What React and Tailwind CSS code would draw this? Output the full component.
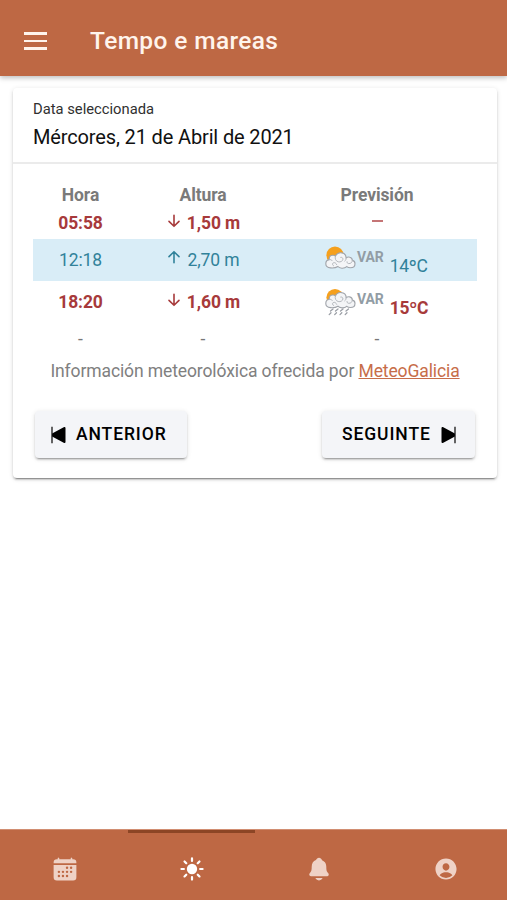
import { IoCalendar, IoSunny, IoNotifications, IoPersonCircle } from 'react-icons/io5'
import clsx from 'clsx'

const tides = [
  { time: '05:58', height: '1,50 m', rising: false },
  { time: '12:18', height: '2,70 m', rising: true, sky: 'cloudy', temp: '14ºC' },
  { time: '18:20', height: '1,60 m', rising: false, sky: 'rain', temp: '15ºC' },
]

const tabs = [
  { id: 'calendar', icon: IoCalendar },
  { id: 'weather', icon: IoSunny },
  { id: 'alerts', icon: IoNotifications },
  { id: 'profile', icon: IoPersonCircle },
]

const TideArrow = ({ rising }) => (
  <svg
    className={clsx('h-[14px] w-[14px] shrink-0 -translate-y-[3px]', rising && 'rotate-180')}
    viewBox="0 0 14 14"
    fill="none"
    stroke="currentColor"
    strokeWidth="1.6"
    strokeLinecap="round"
    strokeLinejoin="round"
  >
    <path d="M7 1.2v11M2 7.400 7 12.300l5-4.900" />
  </svg>
)

const SkyIcon = ({ sky }) => {
  const rain = sky === 'rain'
  return (
    <svg className="h-7 w-[31px] shrink-0" viewBox="0 0 31 28">
      <circle cx="10" cy={rain ? 8.6 : 9.2} r="8.6" fill="#f5a01d" />
      <g transform={rain ? 'translate(0 -4)' : 'translate(0 -.7)'}>
        <path
          d="M5.5 22.6C2.4 22.6.8 20.8.8 18.4c0-2.3 1.5-3.8 3.4-4.1-.3-3 1.6-4.6 3.8-4.3 1-.1 1.9.3 2.4.9C11.500 8.600 13.500 7.300 15.900 7.500c3.200.2 5.200 2.500 5.300 5.100 1-.8 2.200-1.100 3.600-.7 1.700.4 2.500 1.700 2.600 3.200 1.600.3 2.600 1.500 2.600 3.300 0 2.500-1.900 4.100-4.600 4.100-1.600 0-2.700-.4-3.600-1.200-1.200 1.100-3 1.700-4.900 1.600-1.800-.1-3.200-.7-4-1.700-1.700 1.100-4.400 1.700-7.400 1.400Z"
          fill="#f4f5f7"
          stroke="#a0a4aa"
          strokeWidth="1.1"
        />
        <path
          d="M10.400 10.900c-.8 2.600.4 4.900 2.800 5.600 2.300.6 4.500-.7 4.700-2.500.1-1.400-1-2.300-2.200-2M4.200 14.300c1.300-.3 2.400.2 3 1.100M21.200 12.600c.1 1.300-.5 2.500-1.400 3.200M27.400 15.100c-.1 2-1.700 3.300-3.600 3.200-1.200 0-1.900-.8-1.800-1.800M8.500 20.500c-1.200-.6-1.400-2.200-.3-2.900 1.300-.8 3 .2 3.500 1.700"
          fill="none"
          stroke="#b4b8bd"
          strokeWidth="1"
          strokeLinecap="round"
        />
      </g>
      {rain && (
        <path
          d="M8 20l-2.500 2M13 20l-2.500 2M18 20l-2.500 2M23.500 20l-2.500 2M6 23.800l-1.800 1.800M11.500 23.800l-1.800 1.800M16.800 23.800 15 25.600M22 23.800l-1.800 1.800"
          stroke="#9a9ea5"
          strokeWidth="1.300"
          strokeLinecap="round"
        />
      )}
    </svg>
  )
}

const SkipIcon = ({ flip }) => (
  <svg className={clsx('h-[18px] w-[15px]', flip && '-scale-x-100')} viewBox="0 0 15 18">
    <path d="M1 .700v16.600" stroke="currentColor" strokeWidth="1.200" />
    <path
      d="M13.600 1.900v14.200L2 9.900V8.100L13.600 1.900Z"
      fill="currentColor"
      stroke="currentColor"
      strokeWidth="1.800"
      strokeLinejoin="round"
    />
  </svg>
)

const NavButton = ({ children, className }) => (
  <button
    className={clsx(
      'flex h-[47px] items-center rounded bg-[#f4f5f8] text-[17.5px] font-medium tracking-[0.9px] text-black shadow-[0_3px_1px_-2px_rgba(0,0,0,0.2),0_2px_2px_0_rgba(0,0,0,0.14),0_1px_5px_0_rgba(0,0,0,0.12)]',
      className
    )}
  >
    {children}
  </button>
)

const TideRow = ({ tide }) => (
  <div
    className={clsx(
      'grid grid-cols-[95px_150px_198px] items-center text-center text-[17.5px] tracking-[-0.1px]',
      tide.rising ? 'bg-[#d9edf7] text-[#31829a]' : 'font-bold text-[#a73a3b]',
      tide.sky ? 'h-[42px]' : 'h-[31px]',
      tide.sky === 'rain' && 'pt-px'
    )}
  >
    <span>{tide.time}</span>
    <span className="flex items-center justify-center gap-1.5 pl-px">
      <TideArrow rising={tide.rising} />
      {tide.height}
    </span>
    {tide.sky ? (
      <span className="flex items-center pl-[47px]">
        <SkyIcon sky={tide.sky} />
        <span className="ml-px -translate-y-[3px] text-[14px] font-bold text-[#929da5]">VAR</span>
        <span className="ml-[6px] translate-y-[6px] tracking-[-0.3px]">{tide.temp}</span>
      </span>
    ) : (
      <span className="mx-auto h-[2px] w-[11px] -translate-y-[3px] bg-[#c57576]" />
    )}
  </div>
)

export default function App() {
  return (
    <div className="flex h-[900px] w-[507px] flex-col overflow-hidden bg-white font-[Roboto,sans-serif]">
      {/* Toolbar */}
      <header className="z-10 flex h-[76px] shrink-0 items-center bg-[#be6844] pt-1.5 pl-6 text-white shadow-[0_2px_5px_rgba(0,0,0,0.25)]">
        <button className="flex w-[23px] flex-col gap-[5px]" aria-label="Menú">
          <span className="h-[2.5px] w-full bg-[#fff4ec]" />
          <span className="h-[2.5px] w-full bg-[#fff4ec]" />
          <span className="h-[2.5px] w-full bg-[#fff4ec]" />
        </button>
        <h1 className="ml-[43px] text-[24.5px] font-medium tracking-[0.37px] text-[#fff4ec]">Tempo e mareas</h1>
      </header>

      <main className="flex-1 px-[13px] pt-3 pr-[10px]">
        <section className="h-[390px] w-[484px] rounded bg-white shadow-[0_3px_1px_-2px_rgba(0,0,0,0.3),0_2px_2px_0_rgba(0,0,0,0.16),0_1px_5px_0_rgba(0,0,0,0.12)]">
          <div className="h-[76px] border-b-2 border-[#ebebeb] px-5 pt-[11px]">
            <p className="text-[14.75px] leading-5 text-[#303030]">Data seleccionada</p>
            <p className="mt-1 text-[20px] leading-7 tracking-[-0.14px] text-[#111]">Mércores, 21 de Abril de 2021</p>
          </div>

          {/* Tide table */}
          <div className="px-5 pt-5">
            <div className="grid grid-cols-[95px_150px_198px] text-center text-[17.5px] leading-[23px] font-bold tracking-[-0.1px] text-[#7a7a7a]">
              <span>Hora</span>
              <span>Altura</span>
              <span>Previsión</span>
            </div>
            <div className="pt-px pb-px">
              {tides.map(tide => (
                <TideRow key={tide.time} tide={tide} />
              ))}
            </div>
            <div className="grid h-[31px] grid-cols-[95px_150px_198px] items-center text-center text-[17.5px] text-[#777]">
              <span>-</span>
              <span>-</span>
              <span>-</span>
            </div>
            <p className="mt-1 text-center text-[17.5px] leading-6 tracking-[-0.11px] text-[#808080]">
              Información meteorolóxica ofrecida por{' '}
              <a className="text-[#c76d49] underline" href="#">MeteoGalicia</a>
            </p>
            <div className="mt-7 flex justify-between px-0.5">
              <NavButton className="w-[152px] gap-2.5 pl-4">
                <SkipIcon />
                ANTERIOR
              </NavButton>
              <NavButton className="w-[153px] gap-2.5 pl-5">
                SEGUINTE
                <SkipIcon flip />
              </NavButton>
            </div>
          </div>
        </section>
      </main>

      {/* Bottom tabs */}
      <nav className="grid h-[71px] shrink-0 grid-cols-[repeat(4,127px)] border-t border-[#d18e72] bg-[#be6844] pl-px">
        {tabs.map(({ id, icon: Icon }) => {
          const active = id === 'weather'
          return (
            <button
              key={id}
              className={clsx(
                'flex items-center justify-center border-t-3 pt-1',
                active ? 'border-[#8c4525] text-white' : 'border-transparent text-[#efd2c6]'
              )}
            >
              <Icon size={26} />
            </button>
          )
        })}
      </nav>
    </div>
  )
}
